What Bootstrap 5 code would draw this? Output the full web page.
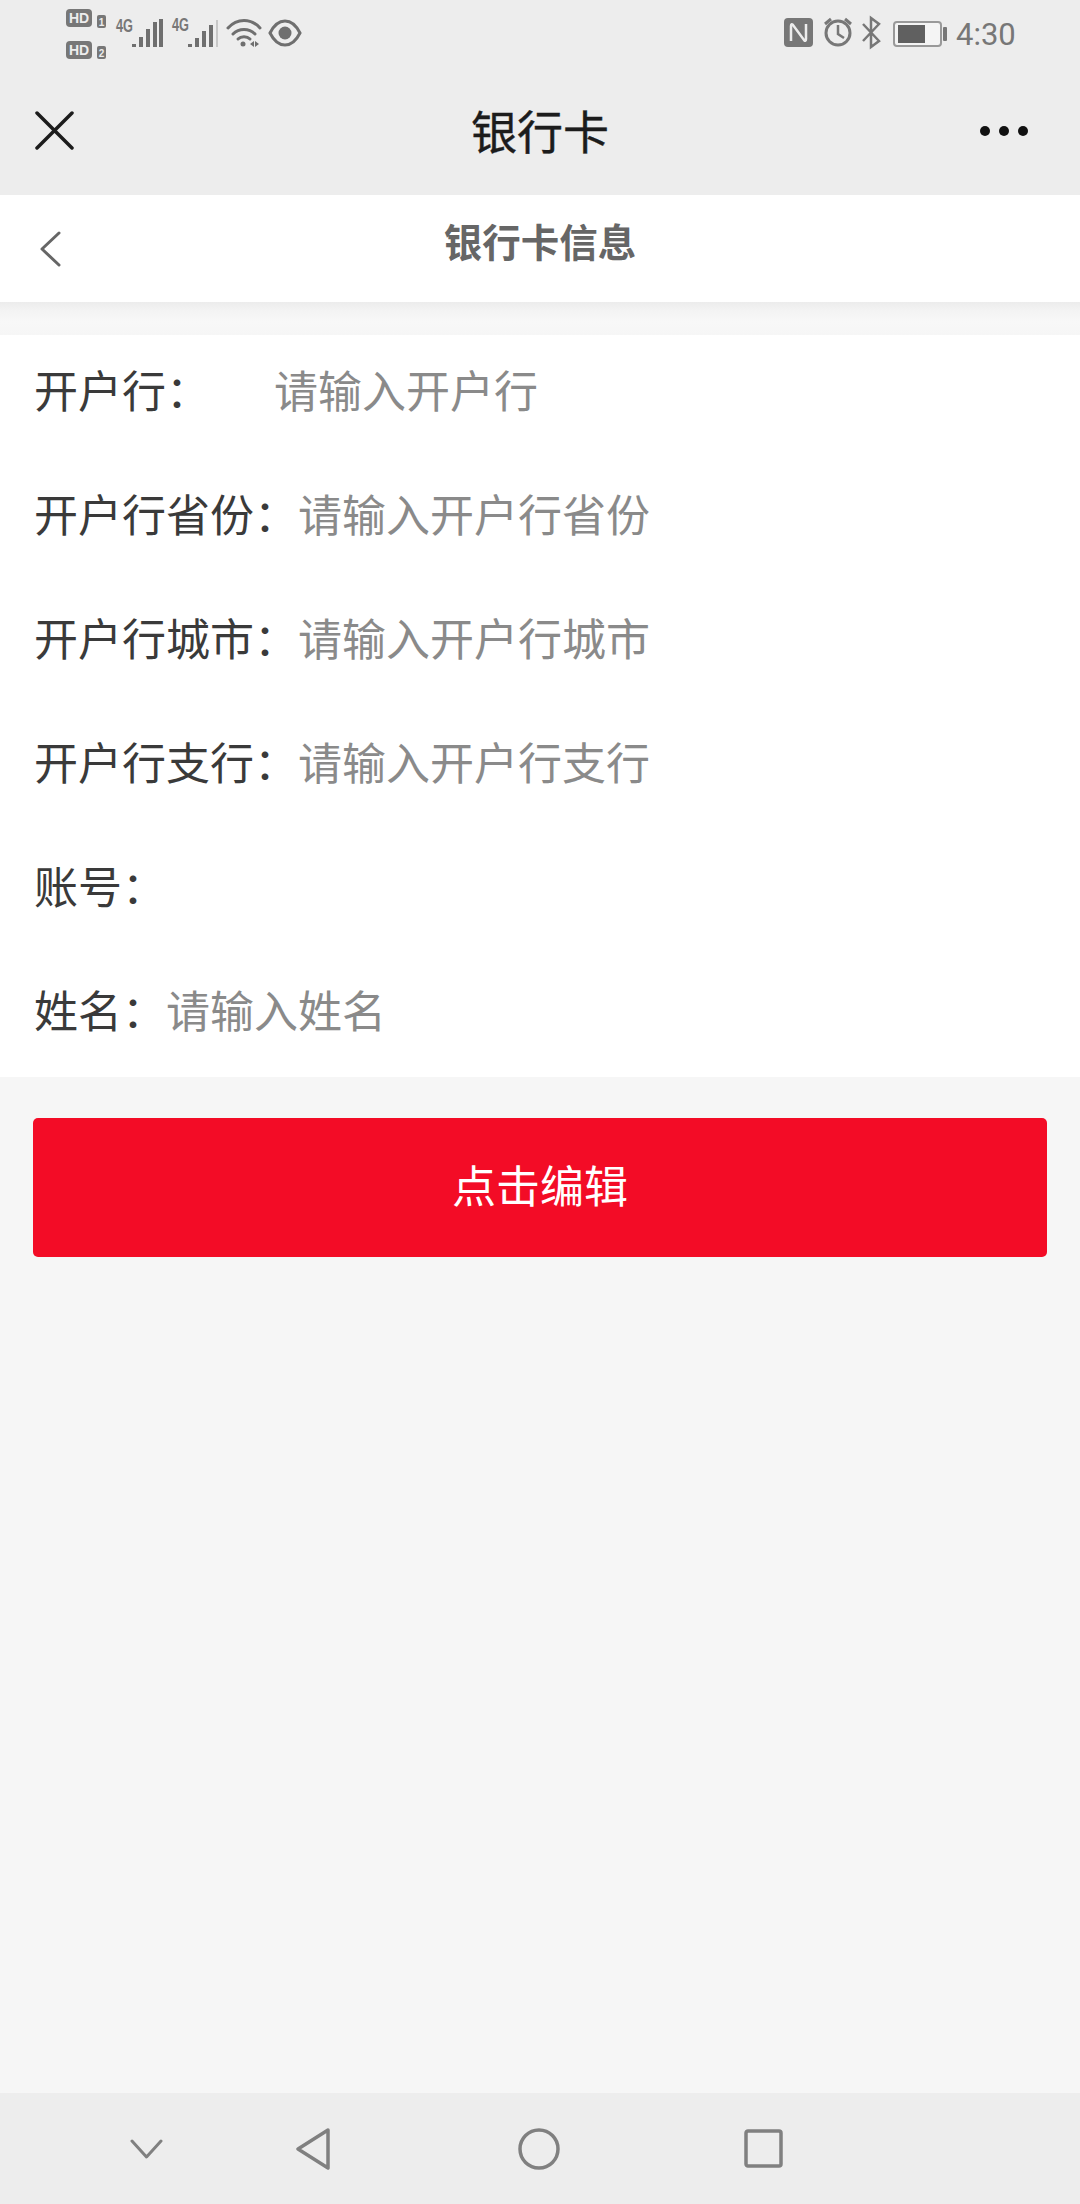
<!DOCTYPE html>
<html lang="zh-CN">
<head>
  <meta charset="UTF-8" />
  <title>银行卡</title>
  <link href="https://cdn.jsdelivr.net/npm/bootstrap@5.3.2/dist/css/bootstrap.min.css" rel="stylesheet">
  <style>
    body {
      background: #f6f6f6;
      font-family: "Liberation Sans", "Noto Sans CJK SC", sans-serif;
      height: 2204px;
    }
    .top-area { background: #ededed; height: 195px; }
    .status-row { height: 66px; }
    .status-svg { display: block; }
    .wx-bar { height: 129px; padding: 0 35px 0 35px; }
    .wx-bar svg { display: block; }
    .wx-side { width: 120px; }
    .wx-close { margin-top: -2px; }
    .wx-more { margin-right: 16px; margin-top: 0; }
    .wx-title { font-size: 46px; line-height: 1; color: #1c1c1c; margin-top: 4px; -webkit-text-stroke: 0.4px #1c1c1c; }
    .sub-header { background: #fff; height: 107px; padding-left: 38px; position: relative; }
    .sub-title {
      position: absolute;
      left: 0;
      right: 0;
      top: 27px;
      text-align: center;
      font-size: 38.500px;
      line-height: 44px;
      font-weight: 700;
      color: #666;
    }
    .sub-shadow { height: 33px; background: linear-gradient(#ececec, #f3f3f3 25%, #f8f8f8 60%, #f6f6f6); }
    .info-form { background: #fff; height: 742px; overflow: hidden; }
    .info-row { height: 124px; padding: 0 34px 8px; font-size: 44px; color: #3a3a3a; }
    .info-label { white-space: nowrap; }
    .label-wide { width: 240px; }
    .info-input {
      border: 0;
      outline: 0;
      padding: 0;
      flex: 1;
      min-width: 0;
      background: transparent;
      color: #3a3a3a;
      font: inherit;
    }
    .info-input::placeholder { color: #8a8a8a; opacity: 1; }
    .edit-wrap { padding: 41px 33px 0; }
    .edit-btn {
      height: 139px;
      background: #f30c26;
      border: 0;
      border-radius: 5px;
      color: #fff;
      font-size: 44px;
      line-height: 1;
    }
    .edit-btn:hover, .edit-btn:active { background: #f30c26; color: #fff; }
    .nav-bottom { background: #ededed; height: 111px; padding-left: 130px; }
    .nav-bottom svg { display: block; }
    .nav-back { margin-left: 132px; }
    .nav-home { margin-left: 187px; }
    .nav-recent { margin-left: 184px; }
  </style>
</head>
<body class="d-flex flex-column">

  <header class="top-area">
    <!-- status bar -->
    <div class="status-row d-flex justify-content-between">
      <svg class="status-svg" width="310" height="66" viewBox="0 0 310 66" fill="none">
        <g font-family="'Liberation Sans', sans-serif" font-weight="700">
          <rect x="66" y="9" width="26" height="18" rx="4" fill="#777"/>
          <text x="79" y="23" font-size="14" fill="#ededed" text-anchor="middle">HD</text>
          <rect x="97" y="15" width="9" height="13" rx="2" fill="#777"/>
          <text x="101.500" y="26" font-size="10" fill="#ededed" text-anchor="middle">1</text>
          <rect x="66" y="41" width="26" height="18" rx="4" fill="#777"/>
          <text x="79" y="55" font-size="14" fill="#ededed" text-anchor="middle">HD</text>
          <rect x="97" y="46" width="9" height="13" rx="2" fill="#777"/>
          <text x="101.500" y="57" font-size="10" fill="#ededed" text-anchor="middle">2</text>
          <text x="116" y="32" font-size="19" fill="#777" textLength="17" lengthAdjust="spacingAndGlyphs">4G</text>
          <text x="172" y="31" font-size="19" fill="#777" textLength="17" lengthAdjust="spacingAndGlyphs">4G</text>
        </g>
        <g stroke="#6f6f6f" stroke-width="4">
          <path d="M134 47v-3M141 47v-10M148 47v-18M155 47v-25M161 47v-28"/>
          <path d="M190 47v-3M197 47v-9M204 47v-16M211 47v-22"/>
          <path d="M217 47v-27" stroke="#bbb" stroke-width="1.500"/>
        </g>
        <g stroke="#6f6f6f" stroke-width="3" stroke-linecap="round">
          <path d="M228 28c9-10 23-10 32 0"/>
          <path d="M233 34c6-6 16-6 22 0"/>
          <path d="M238 39c3-3 9-3 12 0"/>
        </g>
        <circle cx="243" cy="44" r="2.500" fill="#6f6f6f"/>
        <path d="M250 44l4-3v6zM259 44l-4-3v6z" fill="#6f6f6f"/>
        <path d="M270 33c8-16 22-16 30 0c-8 16-22 16-30 0z" stroke="#6f6f6f" stroke-width="3"/>
        <circle cx="285" cy="33" r="6.500" fill="#6f6f6f"/>
      </svg>
      <svg class="status-svg" width="300" height="66" viewBox="780 0 300 66" fill="none">
        <rect x="784" y="18" width="29" height="29" rx="4" fill="#777"/>
        <path d="M791 41V26q0-3 2-1l11 15q2 2 2-1V24" stroke="#ededed" stroke-width="2.500"/>
        <circle cx="838" cy="33" r="12" stroke="#777" stroke-width="3"/>
        <path d="M838 25v9l6 4" stroke="#777" stroke-width="2.500"/>
        <path d="M825 24l6-5M851 24l-6-5" stroke="#777" stroke-width="3"/>
        <path d="M863 24l16 17-8 6V18l8 6-16 17" stroke="#777" stroke-width="2.500"/>
        <rect x="894" y="22" width="47" height="24" rx="3" fill="#f4f4f4" stroke="#999" stroke-width="2"/>
        <rect x="898" y="25" width="27" height="18" fill="#606060"/>
        <rect x="943" y="27" width="4" height="14" rx="1" fill="#777"/>
        <text x="956" y="45" font-family="Roboto, sans-serif" font-size="31" fill="#777">4:30</text>
      </svg>
    </div>
    <!-- wechat title bar -->
    <div class="wx-bar d-flex align-items-center justify-content-between">
      <div class="wx-side">
        <svg class="wx-close" width="40" height="40" viewBox="0 0 40 40" fill="none" stroke="#1c1c1c" stroke-width="3.500" stroke-linecap="round">
          <path d="M2 3l35 35M37 3L2 38"/>
        </svg>
      </div>
      <div class="wx-title">银行卡</div>
      <div class="wx-side d-flex justify-content-end">
        <svg class="wx-more" width="50" height="12" viewBox="0 0 50 12" fill="#111">
          <circle cx="6" cy="6" r="5"/>
          <circle cx="25" cy="6" r="5"/>
          <circle cx="44" cy="6" r="5"/>
        </svg>
      </div>
    </div>
  </header>

  <div class="sub-header d-flex align-items-center">
    <svg width="24" height="36" viewBox="0 0 24 36" fill="none" stroke="#666" stroke-width="3" stroke-linecap="round" stroke-linejoin="round">
      <path d="M21 2L4 18l17 16"/>
    </svg>
    <div class="sub-title">银行卡信息</div>
  </div>
  <div class="sub-shadow"></div>

  <form class="info-form">
    <div class="info-row d-flex align-items-center">
      <label class="info-label label-wide" for="bankName">开户行：</label>
      <input class="info-input" id="bankName" placeholder="请输入开户行" />
    </div>
    <div class="info-row d-flex align-items-center">
      <label class="info-label" for="bankProvince">开户行省份：</label>
      <input class="info-input" id="bankProvince" placeholder="请输入开户行省份" />
    </div>
    <div class="info-row d-flex align-items-center">
      <label class="info-label" for="bankCity">开户行城市：</label>
      <input class="info-input" id="bankCity" placeholder="请输入开户行城市" />
    </div>
    <div class="info-row d-flex align-items-center">
      <label class="info-label" for="bankBranch">开户行支行：</label>
      <input class="info-input" id="bankBranch" placeholder="请输入开户行支行" />
    </div>
    <div class="info-row d-flex align-items-center">
      <label class="info-label" for="account">账号：</label>
      <input class="info-input" id="account" />
    </div>
    <div class="info-row d-flex align-items-center">
      <label class="info-label" for="holder">姓名：</label>
      <input class="info-input" id="holder" placeholder="请输入姓名" />
    </div>
  </form>

  <div class="edit-wrap">
    <button class="btn edit-btn w-100" type="button">点击编辑</button>
  </div>

  <div class="flex-grow-1"></div>

  <!-- android nav -->
  <nav class="nav-bottom d-flex align-items-center">
    <svg width="33" height="20" viewBox="0 0 33 20" fill="none" stroke="#808080" stroke-width="3" stroke-linecap="round" stroke-linejoin="round">
      <path d="M2 2l14.500 16L31 2"/>
    </svg>
    <svg class="nav-back" width="36" height="42" viewBox="0 0 36 42" fill="none" stroke="#808080" stroke-width="3.500" stroke-linejoin="round">
      <path d="M33 2L3 21l30 19z"/>
    </svg>
    <svg class="nav-home" width="42" height="42" viewBox="0 0 42 42" fill="none" stroke="#808080" stroke-width="3.500">
      <circle cx="21" cy="21" r="19"/>
    </svg>
    <svg class="nav-recent" width="39" height="39" viewBox="0 0 39 39" fill="none" stroke="#808080" stroke-width="3.500">
      <rect x="2" y="2" width="35" height="35" rx="2"/>
    </svg>
  </nav>

  <script src="https://cdn.jsdelivr.net/npm/bootstrap@5.3.2/dist/js/bootstrap.bundle.min.js"></script>
</body>
</html>
